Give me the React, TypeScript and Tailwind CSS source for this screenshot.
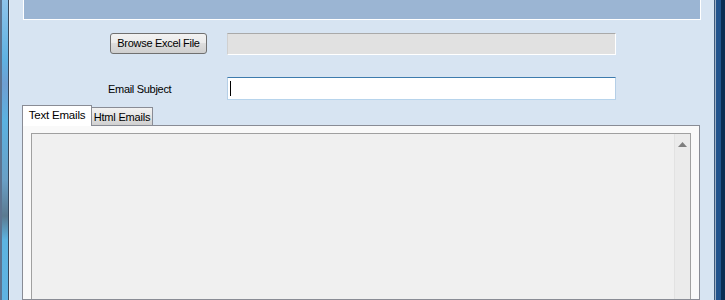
export default function App() {
  return (
    <div className="flex h-[300px] w-[725px] overflow-hidden bg-[#d7e4f2] font-['Liberation_Sans',Arial,sans-serif] text-[11px] text-black">
      {/* left window frame */}
      <div className="flex h-full w-[10px] shrink-0">
        <div className="w-[2px] bg-[#5d7491]" />
        <div className="w-[6px] bg-[linear-gradient(180deg,#8ec3ea_0%,#5fb2e2_20%,#6f9fd2_28%,#5bb2e1_40%,#6aa0c6_60%,#5b7a90_72%,#5db4e1_80%,#5fb3e2_100%)]" />
        <div className="w-[1px] bg-[#34475c]" />
        <div className="w-[1px] bg-[#e4edf7]" />
      </div>

      {/* client area */}
      <div className="flex min-w-0 flex-1 flex-col">
        <div className="mx-[13px] h-[20px] shrink-0 border-x border-b border-white bg-[#9bb5d3]" />

        <div className="mt-[13px] flex h-[21px] items-center">
          <button className="ml-[100px] h-[21px] w-[97px] whitespace-nowrap rounded-[3px] border border-[#707070] bg-[linear-gradient(180deg,#f2f2f2_0%,#ebebeb_45%,#dddddd_50%,#cfcfcf_100%)] text-[11px] leading-none tracking-[-0.3px]">
            Browse Excel File
          </button>
          <div className="ml-[20px] h-[22px] w-[389px] border border-t-[#a9a9a9] border-l-[#d0d0d0] border-r-white border-b-white bg-[#e1e1e1]" />
        </div>

        <div className="mt-[23px] flex h-[23px] items-center">
          <span className="ml-[98px] w-[119px] whitespace-nowrap pt-[2px] text-[11px] tracking-[-0.3px]">Email Subject</span>
          <div className="flex h-[23px] w-[389px] items-center border border-t-[#3d7bad] border-l-[#b5cfe7] border-r-[#b5cfe7] border-b-[#b7d4ec] bg-white pl-[2px]">
            <div className="h-[15px] w-[1px] bg-black" />
          </div>
        </div>

        {/* tabs */}
        <div className="ml-[12px] mt-[5px] flex items-end">
          <div className="relative z-10 -mb-[1px] flex h-[21px] w-[70px] items-center justify-center whitespace-nowrap border-x border-t border-[#898c95] bg-white pb-[1px] text-[11.5px] tracking-[-0.2px]">
            Text Emails
          </div>
          <div className="flex h-[18px] w-[61px] items-center justify-center whitespace-nowrap border-r border-t border-[#898c95] bg-[linear-gradient(180deg,#f2f2f2_0%,#e4e4e4_50%,#d0d0d0_100%)] pt-[1px] text-[11px] tracking-[-0.2px]">
            Html Emails
          </div>
        </div>
        <div className="ml-[12px] mr-[14px] flex flex-1 border border-[#898c95] bg-[#f9f9f9] px-[8px] pt-[7px]">
          <div className="flex flex-1 border-l border-t border-r border-[#a0a0a0] bg-[#f0f0f0]">
            <div className="flex-1" />
            <div className="flex w-[16px] justify-center border-l border-[#e2e2e2] bg-[#ebebeb] pt-[8px]">
              <svg width="9" height="5" viewBox="0 0 9 5">
                <path d="M4.5 0 L9 5 L0 5 Z" fill="#7f7f7f" />
              </svg>
            </div>
          </div>
        </div>
      </div>

      {/* right window frame */}
      <div className="flex h-full w-[11px] shrink-0">
        <div className="w-[1px] bg-[#3d5a7c]" />
        <div className="w-[1px] bg-[#9fb0c4]" />
        <div className="w-[5px] bg-[#21538c]" />
        <div className="w-[4px] bg-[#0a2b52]" />
      </div>
    </div>
  );
}
